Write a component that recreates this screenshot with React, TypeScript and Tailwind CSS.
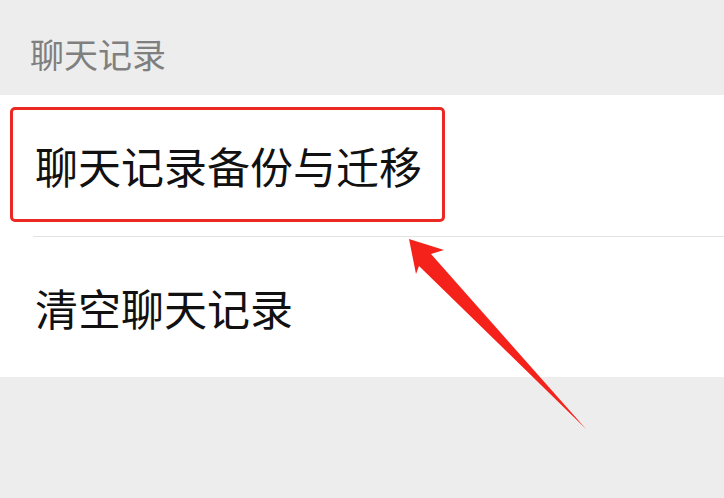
export default function App() {
  const cjk = { fontFamily: '"Noto Sans CJK SC", "Noto Sans", sans-serif' };
  return (
    <div className="relative w-[724px] h-[498px] bg-[#ededed] overflow-hidden" style={cjk}>
      <div className="h-[95px] flex items-center pl-[30px] pt-[12px]">
        <span className="text-[34px] leading-none text-[#7f7f7f]">聊天记录</span>
      </div>
      <div className="bg-white">
        <div className="h-[141px] flex items-center pl-[35px]">
          <span className="text-[43px] leading-none text-[#111]">聊天记录备份与迁移</span>
        </div>
        <div className="ml-[33px] h-px bg-[#e3e3e3]" />
        <div className="h-[140px] flex items-center pl-[35px]">
          <span className="text-[43px] leading-none text-[#111]">清空聊天记录</span>
        </div>
      </div>
      {/* highlight around the backup item */}
      <div className="absolute left-[10px] top-[107px] w-[435px] h-[115px] border-[3px] border-[#ea2a22] rounded-[5px]" />
      <svg className="absolute left-0 top-0" width="724" height="498" viewBox="0 0 724 498">
        <polygon
          points="409,239 444,250 431,254 586,429 419,266 416,274"
          fill="#f5221b"
        />
      </svg>
    </div>
  );
}
